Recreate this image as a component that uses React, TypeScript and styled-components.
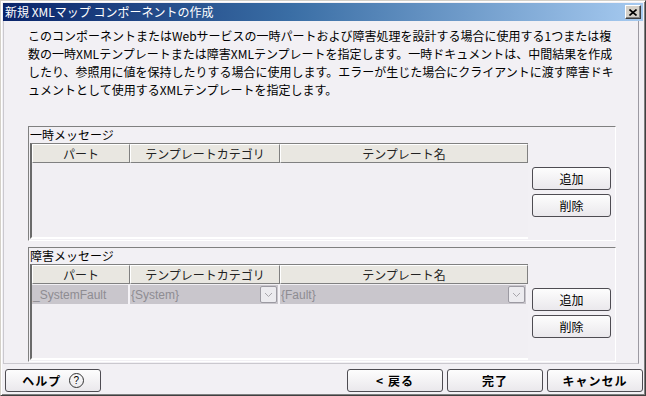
import React from "react";
import styled, { createGlobalStyle } from "styled-components";

const GlobalStyle = createGlobalStyle`
  html, body {
    margin: 0;
    padding: 0;
    background: #f2f0f4;
  }
  body {
    font-family: "Noto Sans CJK JP", "Liberation Sans", sans-serif;
    font-size: 12px;
    color: #000;
    overflow: hidden;
  }
`;

const Window = styled.div`
  width: 646px;
  height: 396px;
  box-sizing: border-box;
  display: flex;
  flex-direction: column;
  padding: 2px;
  background: #f2f0f4;
  border: 1px solid;
  border-color: #d4d0c8 #404040 #404040 #d4d0c8;
  box-shadow: inset 1px 1px #ffffff, inset -1px -1px #808080;
`;

const TitleBar = styled.div`
  height: 18px;
  flex: none;
  display: flex;
  align-items: center;
  justify-content: space-between;
  padding: 0 2px 0 2px;
  background: linear-gradient(90deg, #0a246a 0%, #3a6ea5 45%, #a6caf0 100%);
  color: #fff;
  font-size: 12px;
  line-height: 18px;
`;

const CloseButton = styled.div`
  width: 14px;
  height: 12px;
  display: flex;
  align-items: center;
  justify-content: center;
  background: #d4d0c8;
  border: 1px solid;
  border-color: #ffffff #404040 #404040 #ffffff;
  box-shadow: inset -1px -1px #808080;
`;

const Panel = styled.div`
  height: 343px;
  flex: none;
  width: 636px;
  box-sizing: border-box;
  border-left: 1px solid #cac8ce;
  border-right: 1px solid #9c9aa2;
  border-bottom: 1px solid #cac8ce;
  display: flex;
  flex-direction: column;
`;

const Description = styled.p`
  margin: 6px 20px 0 24px;
  line-height: 18px;
  font-size: 12px;
  white-space: nowrap;
`;

const GroupBox = styled.fieldset<{ $top: number }>`
  margin: ${({ $top }) => $top}px 0 0 24px;
  padding: 0 0 1px 1px;
  width: 588px;
  box-sizing: border-box;
  border: 1px solid;
  border-color: #808080 #ffffff #ffffff #808080;
  min-width: 0;
`;

const GroupLabel = styled.div`
  height: 16px;
  line-height: 16px;
  font-size: 12px;
`;

const GroupRow = styled.div`
  display: flex;
  align-items: stretch;
`;

const TableFrame = styled.div`
  width: 498px;
  height: 96px;
  box-sizing: border-box;
  border-top: 1px solid #808080;
  border-left: 2px solid #6a6a6a;
  border-bottom: 2px solid #ffffff;
  display: flex;
  flex-direction: column;
  background: #f1eff3;
`;

const HeaderRow = styled.div`
  display: flex;
  height: 19px;
`;

const HeaderCell = styled.div<{ $w: number }>`
  width: ${({ $w }) => $w}px;
  box-sizing: border-box;
  background: #e9e7e1;
  border: 1px solid;
  border-color: #ffffff #808080 #808080 #ffffff;
  text-align: center;
  line-height: 17px;
  font-size: 12px;
  color: #222;
`;

const DataRow = styled.div`
  display: flex;
  height: 19px;
  margin-top: 1px;
`;

const DataCell = styled.div<{ $w: number }>`
  width: ${({ $w }) => $w}px;
  box-sizing: border-box;
  background: #c9c6cc;
  border-right: 2px solid #f4f2f6;
  display: flex;
  align-items: center;
  justify-content: space-between;
  padding: 0 1px 0 1px;
  font-family: "Liberation Sans", Arial, sans-serif;
  font-size: 12px;
  color: #8e8c92;
`;

const DropButton = styled.div`
  width: 17px;
  height: 17px;
  box-sizing: border-box;
  border: 1px solid #9c9aa2;
  border-radius: 2px;
  background: #ecebef;
  display: flex;
  align-items: center;
  justify-content: center;
`;

const ButtonColumn = styled.div`
  flex: 1;
  display: flex;
  flex-direction: column;
  justify-content: center;
  align-items: flex-start;
  gap: 4px;
  padding-left: 4px;
  padding-top: 2px;
`;

const Button = styled.button<{ $w: number; $bold?: boolean }>`
  width: ${({ $w }) => $w}px;
  height: 23px;
  box-sizing: border-box;
  border: 1px solid #4e4c52;
  border-radius: 3px;
  background: linear-gradient(#fdfdfd, #eae8ec);
  font-family: "Noto Sans CJK JP", "Liberation Sans", sans-serif;
  font-size: 12px;
  font-weight: ${({ $bold }) => ($bold ? 700 : 400)};
  letter-spacing: ${({ $bold }) => ($bold ? "1px" : "0")};
  color: #000;
  padding: 0;
  display: flex;
  align-items: center;
  justify-content: center;
  gap: 4px;
  white-space: pre;
`;

const BottomBar = styled.div`
  flex: 1;
  display: flex;
  align-items: flex-start;
  padding: 5px 0 0 2px;
  gap: 4px;
`;

const Spacer = styled.div`
  flex: 1;
`;

const HelpMark = styled.span`
  width: 13px;
  height: 13px;
  border: 1px solid #333;
  border-radius: 50%;
  font-size: 10px;
  line-height: 13px;
  text-align: center;
  font-weight: 400;
  letter-spacing: 0;
  font-family: "Liberation Sans", Arial, sans-serif;
`;

const cols = [98, 150, 248];

const Chevron = () => (
  <svg width="9" height="6" viewBox="0 0 9 6">
    <polyline points="1,1 4.5,4.5 8,1" fill="none" stroke="#a8a6ac" strokeWidth="1" />
  </svg>
);

const Header = () => (
  <HeaderRow>
    <HeaderCell $w={cols[0]}>パート</HeaderCell>
    <HeaderCell $w={cols[1]}>テンプレートカテゴリ</HeaderCell>
    <HeaderCell $w={cols[2]}>テンプレート名</HeaderCell>
  </HeaderRow>
);

const SideButtons = () => (
  <ButtonColumn>
    <Button $w={79}>追加</Button>
    <Button $w={79}>削除</Button>
  </ButtonColumn>
);

export default function App() {
  return (
    <>
      <GlobalStyle />
      <Window>
        <TitleBar>
          <span>新規 XMLマップ コンポーネントの作成</span>
          <CloseButton>
            <svg width="8" height="7" viewBox="0 0 8 7">
              <path d="M0.5 0.5 L7.5 6.5 M7.5 0.5 L0.5 6.5" stroke="#000" strokeWidth="1.6" />
            </svg>
          </CloseButton>
        </TitleBar>
        <Panel>
          <Description>
            このコンポーネントまたはWebサービスの一時パートおよび障害処理を設計する場合に使用する1つまたは複
            <br />
            数の一時XMLテンプレートまたは障害XMLテンプレートを指定します。一時ドキュメントは、中間結果を作成
            <br />
            したり、参照用に値を保持したりする場合に使用します。エラーが生じた場合にクライアントに渡す障害ドキ
            <br />
            ュメントとして使用するXMLテンプレートを指定します。
          </Description>

          <GroupBox $top={27}>
            <GroupLabel>一時メッセージ</GroupLabel>
            <GroupRow>
              <TableFrame>
                <Header />
              </TableFrame>
              <SideButtons />
            </GroupRow>
          </GroupBox>

          <GroupBox $top={6}>
            <GroupLabel>障害メッセージ</GroupLabel>
            <GroupRow>
              <TableFrame>
                <Header />
                <DataRow>
                  <DataCell $w={cols[0]}>_SystemFault</DataCell>
                  <DataCell $w={cols[1]}>
                    {"{System}"}
                    <DropButton>
                      <Chevron />
                    </DropButton>
                  </DataCell>
                  <DataCell $w={cols[2]}>
                    {"{Fault}"}
                    <DropButton>
                      <Chevron />
                    </DropButton>
                  </DataCell>
                </DataRow>
              </TableFrame>
              <SideButtons />
            </GroupRow>
          </GroupBox>
        </Panel>
        <BottomBar>
          <Button $w={96} $bold>
            ヘルプ <HelpMark>?</HelpMark>
          </Button>
          <Spacer />
          <Button $w={96} $bold>
            {"< 戻る"}
          </Button>
          <Button $w={96} $bold>
            完了
          </Button>
          <Button $w={96} $bold>
            キャンセル
          </Button>
        </BottomBar>
      </Window>
    </>
  );
}
